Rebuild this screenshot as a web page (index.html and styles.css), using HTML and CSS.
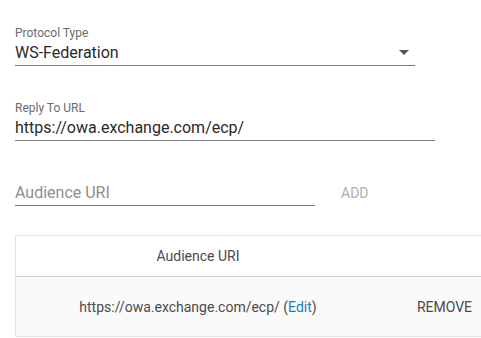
FILE: index.html
```html
<!doctype html>
<html lang="en">
    <head>
        <title>Relying Party - WS-Federation</title>
        <link rel="stylesheet" href="styles.css">
    </head>
    <body>
        <div class="form">
            <div class="field field-protocol">
                <label class="field-label">Protocol Type</label>
                <div class="field-input">
                    <span>WS-Federation</span>
                    <svg class="caret" width="10" height="5" viewBox="0 0 10 5">
                        <path d="M0 0 L10 0 L5 5 Z" fill="#555"/>
                    </svg>
                </div>
            </div>
            <div class="field field-reply">
                <label class="field-label">Reply To URL</label>
                <div class="field-input">https://owa.exchange.com/ecp/</div>
            </div>
            <div class="add-row">
                <div class="field field-audience">
                    <div class="field-input placeholder">Audience URI</div>
                </div>
                <a class="btn-add">ADD</a>
            </div>
        </div>
        <table class="uri-table">
            <tr class="head">
                <th class="col-uri">Audience URI</th>
                <th class="col-action"></th>
            </tr>
            <tr class="item">
                <td class="col-uri">https://owa.exchange.com/ecp/ (<a class="edit">Edit</a>)</td>
                <td class="col-action">REMOVE</td>
            </tr>
        </table>
    </body>
</html>
```

FILE: styles.css
```css
body {
    margin: 0;
    padding: 25px 0 0 15px;
    overflow: hidden;
    font-family: Roboto, "Liberation Sans", sans-serif;
    color: #2a2a2a;
    background: #fff;
}
.field-label {
    display: block;
    font-size: 12px;
    line-height: 16px;
    color: #6b6b6b;
}
.field-input {
    font-size: 16px;
    line-height: 24px;
    border-bottom: 1px solid #7a7a7a;
    display: flex;
    align-items: center;
    justify-content: space-between;
}
.field-protocol {
    width: 400px;
}
.caret {
    margin-right: 6px;
    margin-top: -2px;
}
.field-reply {
    width: 420px;
    margin-top: 34px;
}
.add-row {
    display: flex;
    align-items: flex-end;
    margin-top: 40px;
}
.field-audience {
    width: 300px;
}
.placeholder {
    color: #8e8e8e;
}
.btn-add {
    font-size: 14px;
    color: #b0b0b0;
    margin-left: 26px;
    margin-bottom: 5px;
}
.uri-table {
    margin-top: 29px;
    border-collapse: collapse;
    width: 494px;
    font-size: 14px;
    color: #4a4a4a;
}
.uri-table th,
.uri-table td {
    text-align: center;
    font-weight: normal;
    line-height: 20px;
    padding: 0;
}
.uri-table .head {
    height: 41px;
    border-top: 1px solid #e4e4e4;
    border-left: 1px solid #e4e4e4;
    border-bottom: 1px solid #cfcfcf;
}
.uri-table .item {
    height: 60px;
    background: #fafafa;
    border-left: 1px solid #e4e4e4;
    border-bottom: 1px solid #e4e4e4;
}
.col-uri {
    width: 364px;
}
.edit {
    color: #1a7bc4;
}
```
